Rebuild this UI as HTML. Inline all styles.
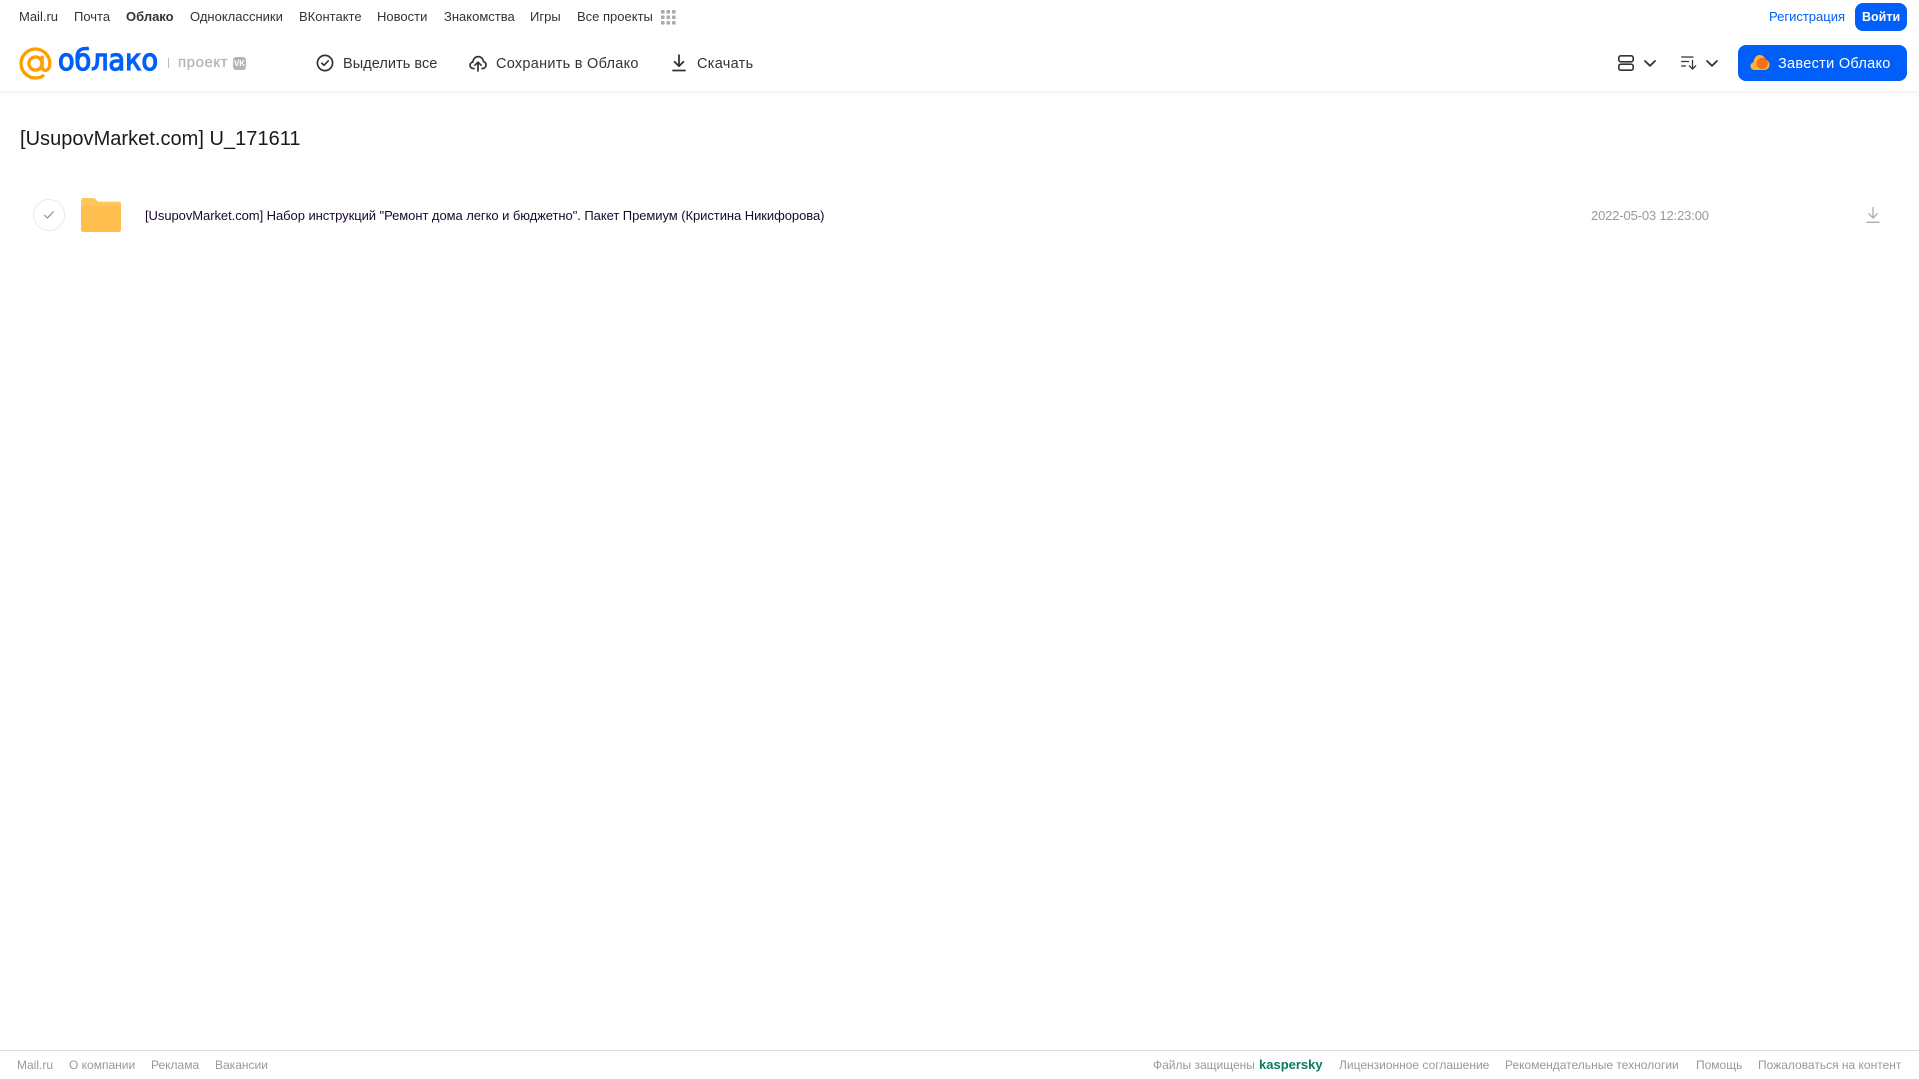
<!DOCTYPE html>
<html lang="ru">
<head>
<meta charset="utf-8">
<title>[UsupovMarket.com] U_171611</title>
<style>
html,body{margin:0;padding:0;background:#fff;}
body{width:1919px;height:1079px;position:relative;overflow:hidden;font-family:"Liberation Sans",Arial,sans-serif;}
.t{position:absolute;white-space:nowrap;line-height:16px;height:16px;}
.n{font-size:13px;color:#333;top:9px;}
.a{font-size:14.5px;color:#333;top:55.5px;letter-spacing:.3px;}
.f{font-size:12px;color:#999;top:1057px;}
svg{position:absolute;overflow:visible;}
#hdr{position:absolute;left:0;top:0;width:1919px;height:91px;background:#fff;box-shadow:0 1px 6px rgba(0,0,0,.08);}
#line{position:absolute;left:0;top:1050px;width:1919px;height:1px;background:#ddd;}
.btn{position:absolute;background:#005ff9;border-radius:8px;}
</style>
</head>
<body>
<div id="hdr"></div>

<span class="t n" style="left:19px">Mail.ru</span>
<span class="t n" style="left:74px">Почта</span>
<span class="t n" style="left:126px;font-weight:bold">Облако</span>
<span class="t n" style="left:190px">Одноклассники</span>
<span class="t n" style="left:299px">ВКонтакте</span>
<span class="t n" style="left:377px">Новости</span>
<span class="t n" style="left:444px">Знакомства</span>
<span class="t n" style="left:530px">Игры</span>
<span class="t n" style="left:577px">Все проекты</span>
<svg style="left:661px;top:10px" width="15" height="15" viewBox="0 0 15 15" fill="#aaa">
<rect x="0" y="0" width="3.6" height="3.6" rx="1"/><rect x="5.5" y="0" width="3.6" height="3.6" rx="1"/><rect x="11" y="0" width="3.6" height="3.6" rx="1"/>
<rect x="0" y="5.5" width="3.6" height="3.6" rx="1"/><rect x="5.5" y="5.5" width="3.6" height="3.6" rx="1"/><rect x="11" y="5.5" width="3.6" height="3.6" rx="1"/>
<rect x="0" y="11" width="3.6" height="3.6" rx="1"/><rect x="5.5" y="11" width="3.6" height="3.6" rx="1"/><rect x="11" y="11" width="3.6" height="3.6" rx="1"/>
</svg>

<span class="t n" style="left:1769px;color:#005ff9">Регистрация</span>
<div class="btn" style="left:1855px;top:3px;width:52px;height:28px"></div>
<span class="t n" style="left:1862px;color:#fff;font-weight:bold;font-size:12.5px">Войти</span>

<!-- logo -->
<svg style="left:19px;top:47px" width="33" height="33" viewBox="0 0 33 33" fill="none">
<circle cx="16.5" cy="16.5" r="6.6" stroke="#ff9e00" stroke-width="3.3"/>
<path d="M23.1 10.2V19.4C23.1 22.4 25 23.4 26.6 23.4C28.8 23.4 30.8 21 30.8 16.5C30.8 8.7 24.3 2 16.5 2C8.6 2 2 8.6 2 16.5C2 24.4 8.6 31 16.5 31C19.4 31 21.8 30.3 24 28.9" stroke="#ff9e00" stroke-width="3.3" stroke-linecap="round"/>
</svg>
<svg style="left:56px;top:44px" width="108" height="34" viewBox="0 0 108 34">
<text x="2" y="26" font-family="DejaVu Sans,sans-serif" font-size="29" fill="#005ff9" stroke="#005ff9" stroke-width="1.3" textLength="100" lengthAdjust="spacingAndGlyphs">облако</text>
</svg>
<div style="position:absolute;left:168px;top:58px;width:1px;height:10px;background:#bbb"></div>
<span class="t" style="left:178px;top:55px;font-size:15px;color:#b5b5b5;letter-spacing:.55px;-webkit-text-stroke:.3px #b5b5b5">проект</span>
<div style="position:absolute;left:233px;top:57px;width:13px;height:13px;border-radius:3px;background:#b5b5b5;color:#fff;font-size:8px;line-height:13px;text-align:center;font-weight:bold">VK</div>

<!-- actions -->
<svg style="left:316px;top:54px" width="18" height="18" viewBox="0 0 18 18" fill="none" stroke="#333" stroke-width="1.7" stroke-linecap="round" stroke-linejoin="round">
<circle cx="9" cy="9" r="7.6"/><path d="M5.8 9.2L8 11.3L12.2 6.9"/>
</svg>
<span class="t a" style="left:343px;letter-spacing:.05px">Выделить все</span>

<svg style="left:469px;top:54px" width="18" height="18" viewBox="0 0 18 18" fill="none" stroke="#333" stroke-width="1.7" stroke-linecap="round" stroke-linejoin="round">
<path d="M5 14.5H4.2C2.4 14.5 1 13 1 11.3C1 9.6 2.2 8.3 3.8 8.1C4.1 5 6.3 2.6 9.2 2.6C12 2.6 14.2 4.8 14.5 7.6C16 8 17 9.4 17 11C17 12.9 15.6 14.5 13.6 14.5H13"/>
<path d="M9 17V8.5M5.9 11.2L9 8.2L12.1 11.2"/>
</svg>
<span class="t a" style="left:496px;letter-spacing:.27px">Сохранить в Облако</span>

<svg style="left:671px;top:54px" width="16" height="18" viewBox="0 0 16 18" fill="none" stroke="#333" stroke-width="1.8" stroke-linecap="round" stroke-linejoin="round">
<path d="M8 1.2V12M3.6 7.8L8 12.2L12.4 7.8"/><path d="M2 16.5H14"/>
</svg>
<span class="t a" style="left:697px">Скачать</span>

<!-- right icons -->
<svg style="left:1618px;top:55px" width="16" height="16" viewBox="0 0 16 16" fill="none" stroke="#333" stroke-width="1.6">
<rect x=".8" y=".8" width="14.4" height="6" rx="2"/><rect x=".8" y="9.2" width="14.4" height="6" rx="2"/>
</svg>
<svg style="left:1644px;top:60px" width="12" height="7" viewBox="0 0 12 7" fill="none" stroke="#333" stroke-width="1.8" stroke-linecap="round" stroke-linejoin="round"><path d="M1 1L6 5.8L11 1"/></svg>
<svg style="left:1681px;top:56px" width="16" height="14" viewBox="0 0 16 14" fill="none" stroke="#333" stroke-width="1.3" stroke-linecap="round" stroke-linejoin="round">
<path d="M.7 1H12M.7 5.5H7.5M.7 10H4.5"/><path d="M11.5 4.5V13M8.3 9.8L11.5 13L14.7 9.8"/>
</svg>
<svg style="left:1706px;top:60px" width="12" height="7" viewBox="0 0 12 7" fill="none" stroke="#333" stroke-width="1.8" stroke-linecap="round" stroke-linejoin="round"><path d="M1 1L6 5.8L11 1"/></svg>

<div class="btn" style="left:1738px;top:45px;width:169px;height:36px"></div>
<svg style="left:1750px;top:54px" width="20" height="17" viewBox="0 0 20 17">
<path d="M4.5 16C2 16 .5 14.2 .5 12C.5 10 1.8 8.6 3.5 8.2C3.8 4 6.5 1 9.8 1C12.6 1 14.7 3 15.4 5.6C17.8 6 19.5 8.2 19.5 10.8C19.5 13.8 17.2 16 14.5 16Z" fill="#ffb330"/>
<circle cx="12.2" cy="9.4" r="5.6" fill="#f4701e"/>
</svg>
<span class="t" style="left:1778px;top:55.5px;font-size:14.5px;color:#fff;letter-spacing:.3px">Завести Облако</span>

<!-- title -->
<span class="t" style="left:20px;top:127px;height:24px;line-height:24px;font-size:20px;color:#1a1a1a;letter-spacing:.03px">[UsupovMarket.com] U_171611</span>

<!-- row -->
<div style="position:absolute;left:33px;top:199px;width:30px;height:30px;border:1px solid #eaeaea;border-radius:50%"></div>
<svg style="left:43px;top:210px" width="12" height="10" viewBox="0 0 12 10" fill="none" stroke="#999" stroke-width="1.3" stroke-linecap="round" stroke-linejoin="round"><path d="M1.5 5.3L4.4 8L10.2 1.8"/></svg>
<svg style="left:81px;top:198px" width="40" height="34" viewBox="0 0 40 34">
<path d="M0 3C0 1.3 1.3 0 3 0H11.5C13 0 14 .6 15 1.6L17 3.6H38C39.1 3.6 40 4.5 40 5.6V10H0Z" fill="#ffc65c"/>
<rect x="0" y="7.5" width="40" height="26.5" rx="2.2" fill="#ffbe4d"/>
</svg>
<span class="t" style="left:145px;top:208px;font-size:13px;color:#1a0a2e;letter-spacing:-.06px">[UsupovMarket.com] Набор инструкций "Ремонт дома легко и бюджетно". Пакет Премиум (Кристина Никифорова)</span>
<span class="t" style="left:1591px;top:208px;font-size:13px;color:#999;letter-spacing:-.15px">2022-05-03 12:23:00</span>
<svg style="left:1866px;top:206px" width="14" height="18" viewBox="0 0 14 18" fill="none" stroke="#aaa" stroke-width="1.3" stroke-linecap="round" stroke-linejoin="round">
<path d="M7 1.5V12M2.8 7.8L7 12L11.2 7.8"/><path d="M1 16.3H13"/>
</svg>

<!-- footer -->
<div id="line"></div>
<span class="t f" style="left:17px">Mail.ru</span>
<span class="t f" style="left:69px">О компании</span>
<span class="t f" style="left:151px">Реклама</span>
<span class="t f" style="left:215px">Вакансии</span>
<span class="t f" style="left:1153px">Файлы защищены</span>
<span class="t f" style="left:1259px;color:#0b7a62;font-weight:bold;font-size:13px">kaspersky</span>
<span class="t f" style="left:1339px">Лицензионное соглашение</span>
<span class="t f" style="left:1505px">Рекомендательные технологии</span>
<span class="t f" style="left:1696px">Помощь</span>
<span class="t f" style="left:1758px">Пожаловаться на контент</span>
</body>
</html>
